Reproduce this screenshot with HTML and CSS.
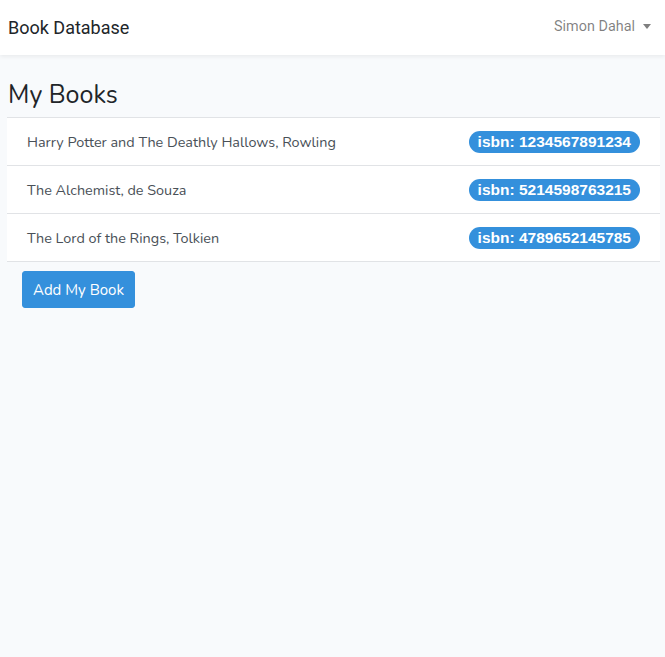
FILE: index.html
```html
<!DOCTYPE html>
<html>
<head>
<meta charset="utf-8">
<link rel="stylesheet" href="styles.css">
</head>
<body>
<nav class="navbar">
  <span class="brand">Book Database</span>
  <span class="user">Simon Dahal<span class="caret"></span></span>
</nav>
<main class="main">
  <h1 class="title">My Books</h1>
  <ul class="list">
    <li class="item"><span>Harry Potter and The Deathly Hallows, Rowling</span><span class="badge">isbn: 1234567891234</span></li>
    <li class="item"><span>The Alchemist, de Souza</span><span class="badge">isbn: 5214598763215</span></li>
    <li class="item"><span>The Lord of the Rings, Tolkien</span><span class="badge">isbn: 4789652145785</span></li>
  </ul>
  <div class="actions"><button class="btn">Add My Book</button></div>
</main>
</body>
</html>
```
FILE: styles.css
```css
* { box-sizing: border-box; }
html, body { margin: 0; padding: 0; }
body {
  background: #f8fafc;
  font-family: "Nunito", "Lato", "Open Sans", sans-serif;
  font-size: 14.4px;
  color: #212529;
  height: 657px;
}
.navbar {
  height: 55px;
  background: #fff;
  box-shadow: 0 2px 4px rgba(0,0,0,.06);
  display: flex;
  align-items: center;
  justify-content: space-between;
  padding: 0 14px 0 8px;
}
.brand {
  font-family: Roboto, sans-serif;
  font-size: 18px;
  color: #212529;
  padding-bottom: 1px;
}
.user {
  font-family: Roboto, sans-serif;
  font-size: 14.4px;
  color: rgba(0,0,0,.5);
  display: flex;
  align-items: center;
  padding-bottom: 3px;
}
.caret {
  display: inline-block;
  margin-left: 8px;
  width: 0; height: 0;
  border-left: 4px solid transparent;
  border-right: 4px solid transparent;
  border-top: 5px solid rgba(0,0,0,.5);
}
.main { padding: 0 5px 0 7px; }
.title {
  margin: 0;
  padding: 25px 0 7px 1px;
  font-size: 25px;
  font-weight: 400;
  line-height: 30px;
}
.list { list-style: none; margin: 0; padding: 0; background: #fff; }
.item {
  height: 48px;
  border-top: 1px solid #e1e3e6;
  display: flex;
  align-items: center;
  justify-content: space-between;
  padding: 0 20px;
  color: #495057;
}
.item:last-child { border-bottom: 1px solid #e1e3e6; height: 49px; }
.badge {
  background: #3490dc;
  color: #fff;
  font-family: "Liberation Sans", Arial, sans-serif;
  font-weight: 700;
  font-size: 15.5px;
  border-radius: 11px;
  height: 22px;
  line-height: 22px;
  padding: 0 9px;
}
.actions { padding: 9px 15px; }
.btn {
  background: #3490dc;
  color: #fff;
  border: 1px solid #3490dc;
  border-radius: 3px;
  font-family: "Nunito", "Lato", "Open Sans", sans-serif;
  font-size: 15px;
  height: 37px;
  width: 113px;
  padding: 0;
}
```
